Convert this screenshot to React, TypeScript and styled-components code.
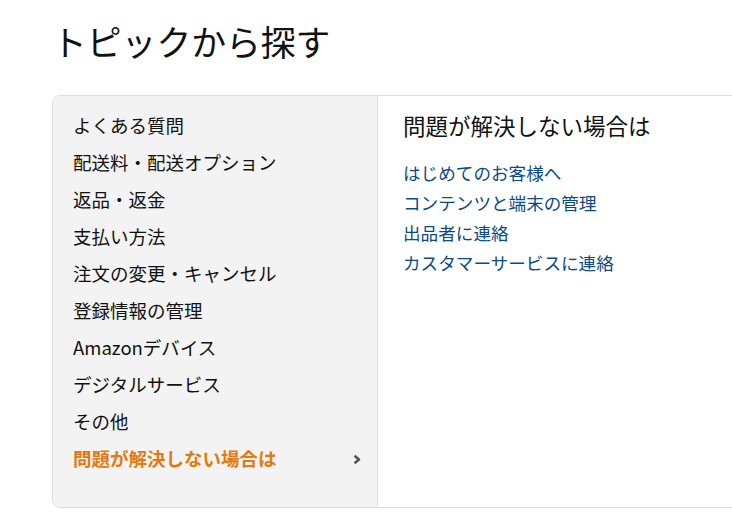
import React from 'react'
import styled, { createGlobalStyle } from 'styled-components'

const GlobalStyle = createGlobalStyle`
  html, body {
    margin: 0;
    padding: 0;
    background: #fff;
    overflow: hidden;
  }
  body {
    font-family: "Noto Sans CJK JP", "Noto Sans", sans-serif;
    color: #111;
  }
`

const Page = styled.div`
  padding: 20px 0 0 52px;
  width: 800px;
`

const Title = styled.h1`
  margin: 0;
  font-size: 34.8px;
  line-height: 42px;
  font-weight: 400;
  color: #111;
`

const Panel = styled.div`
  margin-top: 33px;
  display: flex;
  height: 411px;
  border: 1px solid #ddd;
  border-radius: 8px;
  overflow: hidden;
`

const Sidebar = styled.ul`
  list-style: none;
  margin: 0;
  padding: 10px 0 0 0;
  width: 324px;
  flex-shrink: 0;
  background: #f3f3f3;
  border-right: 1px solid #ddd;
`

const SideItem = styled.li<{ $active?: boolean }>`
  display: flex;
  align-items: center;
  justify-content: space-between;
  height: 37px;
  padding: 0 15px 0 20px;
  font-size: 18.5px;
  font-weight: ${(p) => (p.$active ? 700 : 400)};
  color: ${(p) => (p.$active ? '#e47911' : '#111')};
  white-space: nowrap;
`

const Chevron = styled.svg`
  width: 10px;
  height: 11px;
  margin-top: 4px;
`

const Content = styled.div`
  flex: 1;
  padding: 13px 0 0 25px;
`

const ContentTitle = styled.h2`
  margin: 0 0 16px;
  font-size: 22.5px;
  line-height: 33px;
  font-weight: 400;
  color: #111;
`

const LinkList = styled.ul`
  list-style: none;
  margin: 0;
  padding: 0;
`

const LinkItem = styled.li`
  height: 30px;
  line-height: 30px;
  font-size: 17.6px;
  color: #0c4a87;
  white-space: nowrap;
`

const topics = [
  'よくある質問',
  '配送料・配送オプション',
  '返品・返金',
  '支払い方法',
  '注文の変更・キャンセル',
  '登録情報の管理',
  'Amazonデバイス',
  'デジタルサービス',
  'その他',
]

const links = [
  'はじめてのお客様へ',
  'コンテンツと端末の管理',
  '出品者に連絡',
  'カスタマーサービスに連絡',
]

export default function App() {
  return (
    <Page>
      <GlobalStyle />
      <Title>トピックから探す</Title>
      <Panel>
        <Sidebar>
          {topics.map((t) => (
            <SideItem key={t}>{t}</SideItem>
          ))}
          <SideItem $active>
            問題が解決しない場合は
            <Chevron viewBox="0 0 10 11">
              <path d="M2.5 1.8 L7 5.5 L2.5 9.2" fill="none" stroke="#555" strokeWidth="2.6" strokeLinejoin="round" />
            </Chevron>
          </SideItem>
        </Sidebar>
        <Content>
          <ContentTitle>問題が解決しない場合は</ContentTitle>
          <LinkList>
            {links.map((l) => (
              <LinkItem key={l}>{l}</LinkItem>
            ))}
          </LinkList>
        </Content>
      </Panel>
    </Page>
  )
}
